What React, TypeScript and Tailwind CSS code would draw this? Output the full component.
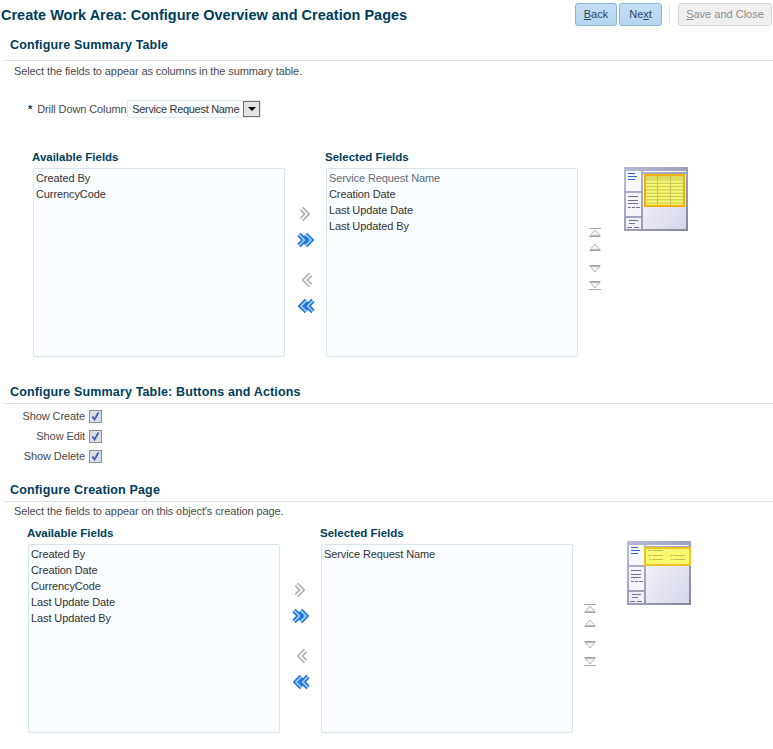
import React from 'react';

const font = "font-['Liberation_Sans',sans-serif]";

function Chevron({ dir, double }: { dir: 'left' | 'right'; double?: boolean }) {
    const stroke = double ? '#1666cf' : '#a6a6a6';
    const inner = double ? '#8ccafc' : '#f8f8f8';
    const flip = dir === 'left' ? 'scale(-1,1) translate(-18,0)' : undefined;
    const xs = double ? [2, 8.5] : [4.5];
    return (
        <svg width="18" height="16" viewBox="0 0 18 16" className="block">
            <g transform={flip} fill="none">
                {xs.map((x) => (
                    <g key={x}>
                        <path d={`M${x} 2.5 L${x + 5.5} 8 L${x} 13.5`} stroke={stroke} strokeWidth="4.6" />
                        <path d={`M${x} 2.5 L${x + 5.5} 8 L${x} 13.5`} stroke={inner} strokeWidth="2" />
                    </g>
                ))}
            </g>
        </svg>
    );
}

function Reorder({ up, bar }: { up?: boolean; bar?: boolean }) {
    return (
        <svg width="12" height="9" viewBox="0 0 12 9" className="block">
            <g transform={up ? undefined : 'scale(1,-1) translate(0,-9)'}>
                {bar && <rect x="0" y="0" width="12" height="1" fill="#a8a8a8" />}
                <path d="M6 2 L11 7.5 H1 Z" fill="#f4f4f4" stroke="#bbbbbb" strokeWidth="1" />
                <rect x="0.5" y="8" width="11" height="1" fill="#a0a0a0" />
            </g>
        </svg>
    );
}

function TablePreview({ mode }: { mode: 'table' | 'form' }) {
    const rows = [0, 1, 2, 3, 4, 5, 6, 7];
    return (
        <svg width="64" height="64" viewBox="0 0 64 64" className="block">
            <defs>
                <linearGradient id={`frame-${mode}`} x1="0" y1="0" x2="1" y2="1">
                    <stop offset="0" stopColor="#b9bcd8" />
                    <stop offset="1" stopColor="#85869f" />
                </linearGradient>
                <linearGradient id={`pane-${mode}`} x1="0" y1="0" x2="1" y2="1">
                    <stop offset="0" stopColor="#f6f6fb" />
                    <stop offset="1" stopColor="#d5d7e8" />
                </linearGradient>
            </defs>
            <rect width="64" height="64" fill={`url(#frame-${mode})`} />
            <rect x="2" y="4" width="15" height="20" fill="#f7f8fc" />
            <rect x="2" y="26" width="15" height="23" fill="#f4f5fa" />
            <rect x="2" y="51" width="15" height="11" fill="#eff0f7" />
            <rect x="19" y="4" width="43" height="1" fill="#f6f6fb" />
            <rect x="19" y="7" width="43" height="55" fill={`url(#pane-${mode})`} />
            <g fill="#2b62c4">
                <rect x="4" y="6" width="7" height="1" />
                <rect x="4" y="9" width="9" height="1" />
                <rect x="4" y="12" width="7" height="1" />
            </g>
            <g fill="#6f7090">
                <rect x="4" y="29" width="10" height="1" />
                <rect x="4" y="33" width="10" height="1" />
                <rect x="4" y="36" width="10" height="1" />
                <rect x="4" y="40" width="3" height="1" />
                <rect x="8" y="40" width="3" height="1" />
                <rect x="12" y="40" width="4" height="1" />
                <rect x="5" y="53" width="9" height="1" />
                <rect x="5" y="56" width="6" height="1" />
                <rect x="3" y="60" width="5" height="1" />
                <rect x="10" y="60" width="5" height="1" />
            </g>
            {mode === 'table' ? (
                <g>
                    <rect x="21" y="8" width="39" height="31" fill="#f8f86e" stroke="#efb20e" strokeWidth="2" />
                    <rect x="22" y="9" width="37" height="3" fill="#dcdc62" />
                    {rows.map((r) => (
                        <rect key={r} x="22" y={12.5 + r * 3.3} width="37" height="1" fill="#c4c35a" />
                    ))}
                    <rect x="33" y="9" width="1" height="29" fill="#c4c35a" />
                    <rect x="46" y="9" width="1" height="29" fill="#c4c35a" />
                </g>
            ) : (
                <g>
                    <rect x="18" y="7" width="45" height="17" fill="#f8f86e" stroke="#ecc42a" strokeWidth="2" />
                    <g fill="#c2c05a">
                        <rect x="21" y="9" width="3" height="1" />
                        <rect x="25" y="9" width="11" height="1" />
                        <rect x="21" y="14" width="3" height="1" />
                        <rect x="25" y="14" width="11" height="1" />
                        <rect x="43" y="14" width="3" height="1" />
                        <rect x="47" y="14" width="11" height="1" />
                        <rect x="22" y="18" width="2" height="1" />
                        <rect x="25" y="18" width="11" height="1" />
                        <rect x="44" y="18" width="2" height="1" />
                        <rect x="47" y="18" width="11" height="1" />
                    </g>
                </g>
            )}
        </svg>
    );
}

function FieldBox({ title, items, muted }: { title: string; items: string[]; muted?: boolean }) {
    return (
        <div className="w-[252px] shrink-0">
            <div className="-ml-px h-[22px] text-[11.5px] leading-[22px] font-bold text-[#003d5b]">{title}</div>
            <div className="h-[189px] rounded-[2px] border border-[#d9e5ec] bg-[#f9fdff] pt-[1px] pl-[2px]">
                {items.map((item, i) => (
                    <div key={item} className={`h-4 text-[11px] leading-4 tracking-[-0.1px] ${muted && i === 0 ? 'text-[#5f6b78]' : 'text-[#333333]'}`}>
                        {item}
                    </div>
                ))}
            </div>
        </div>
    );
}

function Shuttle({ available, selected, muted, mode, previewClass }: {
    available: string[];
    selected: string[];
    muted?: boolean;
    mode: 'table' | 'form';
    previewClass: string;
}) {
    return (
        <div className="flex">
            <FieldBox title="Available Fields" items={available} />
            <div className="flex w-[41px] shrink-0 flex-col items-center pt-[62px]">
                <div className="flex h-[12px] items-center"><Chevron dir="right" /></div>
                <div className="mt-[14px] flex h-[12px] items-center"><Chevron dir="right" double /></div>
                <div className="mt-[28px] flex h-[12px] items-center"><Chevron dir="left" /></div>
                <div className="mt-[14px] flex h-[12px] items-center"><Chevron dir="left" double /></div>
            </div>
            <FieldBox title="Selected Fields" items={selected} muted={muted} />
            <div className="flex w-[34px] shrink-0 flex-col items-center pt-[82px]">
                <Reorder up bar />
                <div className="mt-[5px]"><Reorder up /></div>
                <div className="mt-[14px]"><Reorder /></div>
                <div className="mt-[7px]"><Reorder bar /></div>
            </div>
            <div className={previewClass}>
                <TablePreview mode={mode} />
            </div>
        </div>
    );
}

function SectionHeader({ title, padClass }: { title: string; padClass: string }) {
    return (
        <div className={`ml-[5px] border-b border-[#d6e1e8] pl-[5px] text-[12.5px] leading-[16px] font-bold tracking-[0.15px] text-[#003d5b] ${padClass}`}>
            {title}
        </div>
    );
}

function CheckRow({ label }: { label: string }) {
    return (
        <div className="flex h-5 items-center">
            <span className="w-[85px] pr-[4px] text-right text-[11px] tracking-[-0.1px] text-[#4a4a4a]">{label}</span>
            <span className="flex h-[13px] w-[13px] items-center justify-center border border-[#8f8f8f] bg-[#d8dde8]">
                <svg width="11" height="11" viewBox="0 0 11 11">
                    <path d="M2.5 5.5 L4.5 8.5 L8.5 1.5" fill="none" stroke="#3a52b0" strokeWidth="1.6" />
                </svg>
            </span>
        </div>
    );
}

export default function App() {
    return (
        <div className={`h-[749px] w-[773px] overflow-hidden bg-white ${font}`}>
            {/* Title bar */}
            <div className="flex h-[31px] items-center justify-between pr-[1px] pl-[1px]">
                <h1 className="text-[14.5px] font-bold text-[#003d5b]">Create Work Area: Configure Overview and Creation Pages</h1>
                <div className="mb-[2px] flex items-center text-[11px]">
                    <button className="h-[23px] w-[42px] rounded-[3px] border border-[#8fb2d3] bg-linear-to-b from-[#c6def6] to-[#b6d4f0] text-[#30455a]"><u>B</u>ack</button>
                    <button className="ml-[2px] h-[23px] w-[43px] rounded-[3px] border border-[#8fb2d3] bg-linear-to-b from-[#c6def6] to-[#b6d4f0] text-[#30455a]">Ne<u>x</u>t</button>
                    <span className="mr-[8px] ml-[7px] h-[17px] w-px bg-[#dfe3e6]" />
                    <button className="h-[23px] w-[94px] rounded-[3px] border border-[#d6d6d6] bg-[#f0f0f0] text-[#8c8c8c]"><u>S</u>ave and Close</button>
                </div>
            </div>

            <div className="mt-[6px]">
                <SectionHeader title="Configure Summary Table" padClass="pb-[7px]" />
                <p className="mt-[2px] pl-[14px] text-[11px] leading-4 tracking-[-0.1px] text-[#4a4a4a]">Select the fields to appear as columns in the summary table.</p>
                <div className="mt-[20px] flex h-[20px] items-center pl-[28px] text-[11px] tracking-[-0.1px]">
                    <span className="font-bold text-[#003d5b]">*</span>
                    <span className="ml-[5px] w-[86px] whitespace-nowrap text-[#4a4a4a]">Drill Down Column</span>
                    <div className="ml-[4px] flex h-[18px] w-[134px] items-center rounded-[2px] border border-[#e2e8ee] bg-[#f9fdff] pl-[4px] text-[#333333]">
                        <span className="w-[112px] whitespace-nowrap tracking-[-0.3px]">Service Request Name</span>
                        <span className="flex h-[16px] w-[17px] items-center justify-center border border-[#707070] bg-[#e4e4e4]">
                            <span className="h-0 w-0 border-x-[4px] border-t-[4px] border-x-transparent border-t-black" />
                        </span>
                    </div>
                </div>
                <div className="mt-[27px] pl-[33px]">
                    <Shuttle
                        available={['Created By', 'CurrencyCode']}
                        selected={['Service Request Name', 'Creation Date', 'Last Update Date', 'Last Updated By']}
                        muted
                        mode="table"
                        previewClass="ml-[12px] pt-[21px]"
                    />
                </div>
            </div>

            <div className="mt-[27px]">
                <SectionHeader title="Configure Summary Table: Buttons and Actions" padClass="pb-[3px]" />
                <div className="mt-[2px] pl-[4px]">
                    <CheckRow label="Show Create" />
                    <CheckRow label="Show Edit" />
                    <CheckRow label="Show Delete" />
                </div>
            </div>

            <div className="mt-[16px]">
                <SectionHeader title="Configure Creation Page" padClass="pb-[3px]" />
                <p className="mt-[1px] pl-[14px] text-[11px] leading-4 tracking-[-0.1px] text-[#4a4a4a]">Select the fields to appear on this object's creation page.</p>
                <div className="mt-[3px] pl-[28px]">
                    <Shuttle
                        available={['Created By', 'Creation Date', 'CurrencyCode', 'Last Update Date', 'Last Updated By']}
                        selected={['Service Request Name']}
                        mode="form"
                        previewClass="ml-[20px] pt-[19px]"
                    />
                </div>
            </div>
        </div>
    );
}
